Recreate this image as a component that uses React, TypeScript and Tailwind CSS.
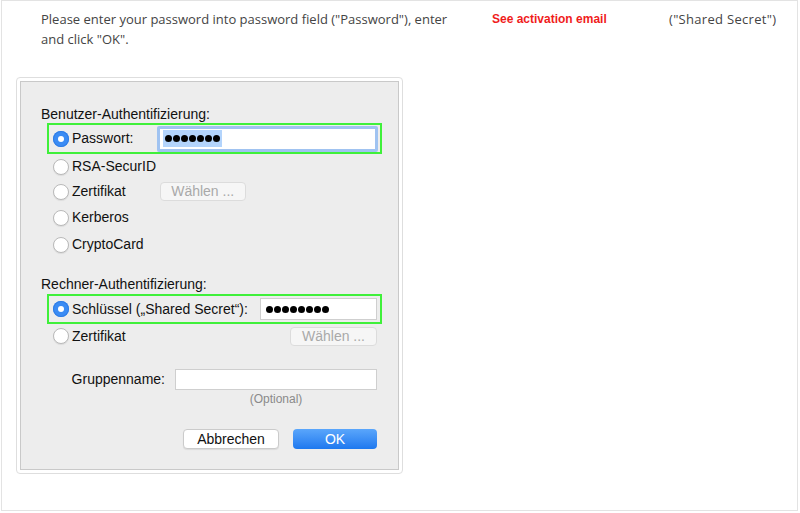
import React from 'react';

const mac = { fontFamily: '"Liberation Sans", Arial, sans-serif' };
const page = { fontFamily: '"Open Sans", Lato, sans-serif' };

const Radio = ({ on = false }: { on?: boolean }) =>
  on ? (
    <span className="flex h-[16px] w-[16px] shrink-0 items-center justify-center rounded-full bg-[#3b8cf4] shadow-[inset_0_0_0_1px_#2f7de6]">
      <span className="h-[6px] w-[6px] rounded-full bg-white" />
    </span>
  ) : (
    <span className="h-[16px] w-[16px] shrink-0 rounded-full border border-[#b9b9b9] bg-white shadow-[0_1px_1px_rgba(0,0,0,0.08)]" />
  );

const Dots = ({ n }: { n: number }) => (
  <span className="flex items-center gap-[1px]">
    {Array.from({ length: n }).map((_, i) => (
      <span key={i} className="h-[7px] w-[7px] rounded-full bg-black" />
    ))}
  </span>
);

const Choose = ({ className = '' }: { className?: string }) => (
  <span
    className={`flex h-[19px] items-center justify-center rounded-[4px] border border-[#dcdcdc] bg-[#f6f6f6] text-[14px] text-[#a9a9a9] ${className}`}
  >
    Wählen ...
  </span>
);

const OptionRow = ({ label, h, children }: { label: string; h: string; children?: React.ReactNode }) => (
  <div className={`flex items-center pl-[32px] ${h}`}>
    <Radio />
    <span className="ml-[3px] text-[14px] text-[#111]">{label}</span>
    {children}
  </div>
);

export default function App() {
  return (
    <div className="ml-[1px] h-[511px] w-[797px] border border-[#e3e3e3] bg-white">
      {/* Instructions */}
      <div className="flex pl-[39px] pt-[8px] text-[13px] leading-[20px] text-[#444]" style={page}>
        <div className="w-[451px]">
          Please enter your password into password field ("Password"), enter
          <br />
          and click "OK".
        </div>
        <div className="w-[177px] text-[12px] font-bold text-[#f01c1c]" style={mac}>
          See activation email
        </div>
        <div className="tracking-[0.3px]">("Shared Secret")</div>
      </div>

      {/* Screenshot of the dialog */}
      <div className="ml-[14px] mt-[28px] w-[387px] rounded-[4px] border border-[#dedede] bg-white p-[3px]" style={mac}>
        <div className="h-[389px] border border-[#c9c9c9] bg-[#ededed]">
          <div className="ml-[20px] mt-[24px] h-[16px] text-[14px] leading-[16px] text-[#111]">
            Benutzer-Authentifizierung:
          </div>

          <div className="ml-[26px] mt-[1px] flex h-[31px] w-[335px] items-center border-2 border-[#3ff03a] pl-[4px] pr-[2px]">
            <Radio on />
            <span className="ml-[3px] w-[85px] text-[14px] text-[#111]">Passwort:</span>
            <div className="flex h-[26px] flex-1 items-center rounded-[2px] border-[3px] border-[#a0c3f1] bg-white pl-[3px]">
              <span className="flex h-[17px] items-center bg-[#b3d4fc] px-[2px]">
                <Dots n={7} />
              </span>
            </div>
          </div>

          <OptionRow label="RSA-SecurID" h="h-[25px]" />
          <OptionRow label="Zertifikat" h="h-[25px]">
            <Choose className="ml-[34px] w-[86px]" />
          </OptionRow>
          <OptionRow label="Kerberos" h="h-[27px]" />
          <OptionRow label="CryptoCard" h="h-[27px]" />

          <div className="ml-[20px] mt-[18px] h-[16px] text-[14px] leading-[16px] text-[#111]">
            Rechner-Authentifizierung:
          </div>

          <div className="ml-[26px] mt-[2px] flex h-[30px] w-[335px] items-center border-2 border-[#3ff03a] pl-[4px] pr-[3px]">
            <Radio on />
            <span className="ml-[3px] flex-1 text-[14px] text-[#111]">Schlüssel („Shared Secret“):</span>
            <div className="flex h-[22px] w-[117px] items-center border border-[#cfcfcf] bg-white pl-[5px]">
              <Dots n={8} />
            </div>
          </div>

          <div className="flex h-[24px] items-center pl-[32px] pr-[21px]">
            <Radio />
            <span className="ml-[3px] flex-1 text-[14px] text-[#111]">Zertifikat</span>
            <Choose className="w-[87px]" />
          </div>

          <div className="mt-[21px] flex h-[21px] items-center pr-[21px]">
            <span className="w-[154px] pr-[10px] text-right text-[14px] text-[#111]">Gruppenname:</span>
            <div className="h-[21px] flex-1 border border-[#cfcfcf] bg-white" />
          </div>
          <div className="mt-[2px] flex h-[14px] items-center pl-[154px] pr-[21px]">
            <span className="flex-1 text-center text-[12px] text-[#8a8a8a]">(Optional)</span>
          </div>

          <div className="mt-[23px] flex justify-end gap-[14px] pr-[21px]">
            <span className="flex h-[20px] w-[96px] items-center justify-center rounded-[4px] border border-[#cbcbcb] bg-white text-[14px] text-[#111] shadow-[0_1px_1px_rgba(0,0,0,0.08)]">
              Abbrechen
            </span>
            <span className="flex h-[20px] w-[84px] items-center justify-center rounded-[4px] bg-gradient-to-b from-[#5aa6fb] to-[#1c78ef] text-[14px] text-white">
              OK
            </span>
          </div>
        </div>
      </div>
    </div>
  );
}
